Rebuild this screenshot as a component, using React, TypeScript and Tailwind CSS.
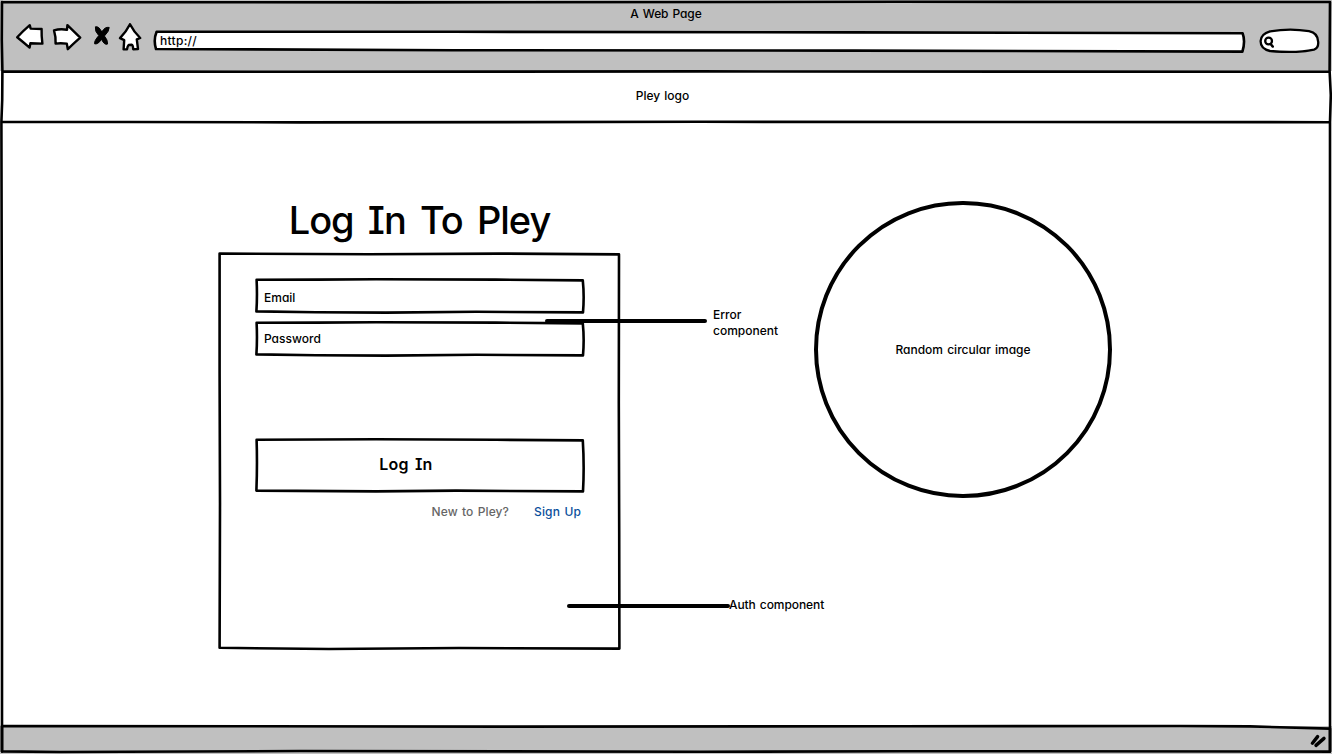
import type { ReactNode } from "react";

const INK = "#000";

/** Hand-drawn outline laid behind the content of a box, in the box's own pixel units. */
function Outline({ d, fill = "none", width = 2.6 }: { d: string; fill?: string; width?: number }) {
  return (
    <svg className="pointer-events-none absolute inset-0 h-full w-full overflow-visible" aria-hidden="true">
      <path d={d} fill={fill} stroke={INK} strokeWidth={width} strokeLinejoin="round" strokeLinecap="round" />
    </svg>
  );
}

function Field({ children }: { children: ReactNode }) {
  return (
    <div className="relative flex h-[34px] w-[328px] items-center pl-2">
      <Outline
        fill="#fff"
        d="M.6 .8 L60 .6 L120 .2 L240 .6 L326.8 1.4 Q328.4 17 327 33.4 L220 32.8 L130 33.6 L60 33.2 L.4 32.4 Q1.4 17 .6 .8Z"
      />
      <span className="relative">{children}</span>
    </div>
  );
}

function ToolbarIcons() {
  return (
    <div className="flex">
      <svg className="ml-[15px] h-[30px] w-[30px]" viewBox="15 23 30 30" fill="#fff" stroke={INK} strokeWidth="2.4" strokeLinejoin="round">
        <path d="M17.2 37.3 Q23 31 29.8 25.2 L30.6 28.6 L41.6 29 Q41.4 36 42.4 43.6 L30.4 43.2 L29.6 47.6 Q23 42 17.2 37.3Z" />
      </svg>
      <svg className="ml-[7px] h-[30px] w-[30px]" viewBox="52 23 30 30" fill="#fff" stroke={INK} strokeWidth="2.4" strokeLinejoin="round">
        <path d="M54 30.4 Q60 28.6 67 29.8 L67.4 25.2 L80.2 37.6 Q74 43 67.8 49.2 L66.8 43.6 Q60 42.8 55.6 43.6 Q56 37 54 30.4Z" />
      </svg>
      <svg className="ml-[10px] h-[30px] w-[20px]" viewBox="92 23 20 30" fill={INK} stroke={INK} strokeWidth="1" strokeLinejoin="round">
        <path d="M95.4 26.8 Q99 26 101.8 32 Q104.8 26.6 109.2 27.4 Q109.4 31 104.4 36 Q107.8 39.8 107.6 44 Q104.6 45.6 101.6 39.4 Q97.6 44.8 94.6 43.8 Q94 41 98.8 35.6 Q94.6 31.4 95.4 26.8Z" />
      </svg>
      <svg className="ml-[6px] h-[30px] w-[26px]" viewBox="118 23 26 30" fill="#fff" stroke={INK} strokeWidth="2.4" strokeLinejoin="round">
        <path d="M130 24.2 Q134 32 140.2 38 L136.8 39.4 L138 49 L133.2 49.2 Q133 45 131.6 44.8 L128.6 45 Q127.6 46 127 49.2 L123.6 49.4 L124.2 40.2 L120 38.2 Q126 32 130 24.2Z" />
      </svg>
    </div>
  );
}

export default function App() {
  return (
    <div className="relative flex h-[754px] w-[1332px] flex-col overflow-hidden bg-white font-['Inter',sans-serif] text-[12px] font-medium leading-4 text-black [font-feature-settings:'cv11','cv08'] [word-spacing:1px]">
      <header className="flex h-[71px] flex-col bg-[#c0c0c0]">
        <div className="flex h-[23px] items-center justify-center pt-[5px]">
          <span className="tracking-[-0.1px]">A Web Page</span>
        </div>
        <div className="flex h-[30px]">
          <ToolbarIcons />
          <div className="relative ml-[9px] h-[30px] w-[1092px] pl-[7px] pt-[10px]">
            <Outline fill="#fff" d="M3.6 8.8 L300 8.8 L700 9.4 L1089.6 10.2 Q1092.6 18 1089.4 28.6 L700 27.6 L300 27.2 L3 26 Q.2 17 3.6 8.8Z" />
            <span className="relative tracking-[0.3px]">http://</span>
          </div>
          <svg className="ml-[13px] h-[30px] w-[64px]" viewBox="1258 23 64 30" fill="none" stroke={INK} strokeWidth="2.3" strokeLinecap="round">
            <path fill="#fff" d="M1270 31.4 Q1290 28 1309 31.2 Q1318 33 1318.2 42 Q1318.6 48 1314 49.6 Q1296 53.6 1270 51 Q1260.4 49 1260.6 41 Q1261 34 1270 31.4Z" />
            <circle cx="1268.6" cy="41" r="3.4" />
            <path d="M1270.6 44 L1272.8 46.6" strokeWidth="2.4" />
          </svg>
        </div>
      </header>

      <div className="flex h-[51px] items-center justify-center pb-[2px] pr-[7px]">
        <span>Pley logo</span>
      </div>

      <main className="flex h-[604px] items-start">
        <section className="ml-[219px] flex w-[401px] flex-col">
          <h1 className="flex h-[131px] items-end justify-center pb-[9px] text-[38px] leading-[48px] tracking-[-1px] [word-spacing:5px]">
            Log In To Pley
          </h1>
          <div className="relative flex h-[396px] flex-col pl-[37px] pt-[26px]">
            <Outline d="M.6 .6 L150 1.2 L280 .6 L400 1.4 L399.8 150 L400.2 280 L400.4 395.6 L240 395 L110 396 L.6 394.8 L1 250 L.6 120Z" />
            <svg className="absolute left-[326px] top-[64px] h-[8px] w-[164px]" viewBox="0 0 164 8" aria-hidden="true">
              <path d="M2 4 H160" stroke={INK} strokeWidth="4" strokeLinecap="round" />
            </svg>
            <div className="absolute left-[494px] top-[54px] w-[90px]">Error component</div>
            <div className="[&_span]:top-[2px]">
              <Field>Email</Field>
            </div>
            <div className="mt-[9px]">
              <Field>Password</Field>
            </div>
            <button className="relative mt-[83px] h-[53px] w-[328px] pb-1 pr-7 text-[16px] font-semibold tracking-[0.2px] [word-spacing:2px]">
              <Outline d="M.6 .8 L120 .2 L240 .8 L326.8 1.4 Q328.4 27 327 52.4 L200 51.6 L120 52.4 L.4 51.6 Q1.4 26 .6 .8Z" />
              <span className="relative">Log In</span>
            </button>
            <div className="mt-[12px] flex w-[325px] justify-end gap-[25px]">
              <span className="tracking-[0.1px] text-[#666]">New to Pley?</span>
              <a className="tracking-[0.15px] text-[#0b4f9c]">Sign Up</a>
            </div>
            <svg className="absolute left-[347px] top-[349px] h-[8px] w-[166px]" viewBox="0 0 166 8" aria-hidden="true">
              <path d="M3 4 H162" stroke={INK} strokeWidth="4" strokeLinecap="round" />
            </svg>
            <div className="absolute left-[510px] top-[344px] whitespace-nowrap tracking-[-0.08px]">Auth component</div>
          </div>
        </section>
        <div className="ml-[194px] mt-[79px] flex h-[297px] w-[298px] items-center justify-center rounded-full border-4 border-black">
          Random circular image
        </div>
      </main>

      <footer className="relative flex flex-1 items-center justify-end bg-[#c0c0c0] pr-[4px]">
        <Outline fill="#c0c0c0" d="M2 0 L500 .6 L900 .2 L1180 0 L1250 .4 L1330 2.6 L1330 25.6 L900 25.2 L700 25.8 L300 25 L60 26 L2 25.4Z" />
        <svg className="relative h-[16px] w-[20px]" viewBox="0 0 20 16" fill="none" stroke={INK} strokeWidth="3.4" strokeLinecap="round" aria-hidden="true">
          <path d="M4.4 11.2 L9.6 4.6 M8 13.4 L16 6.4" />
        </svg>
      </footer>

      <Outline d="M2 2 L400 2.4 L900 1.8 L1330 2 L1329.6 71 L1330.8 95 L1330 122 L1330 500 L1330 751.6 M2 2 L1.8 40 L2.4 71 L2.2 100 L1.4 122 L2 400 L2 751.6 M2.4 71.4 L300 71.8 L700 71.4 L1329.6 71.8 M1.4 121.8 L300 122.4 L700 121.8 L1330 122.2" />
    </div>
  );
}
